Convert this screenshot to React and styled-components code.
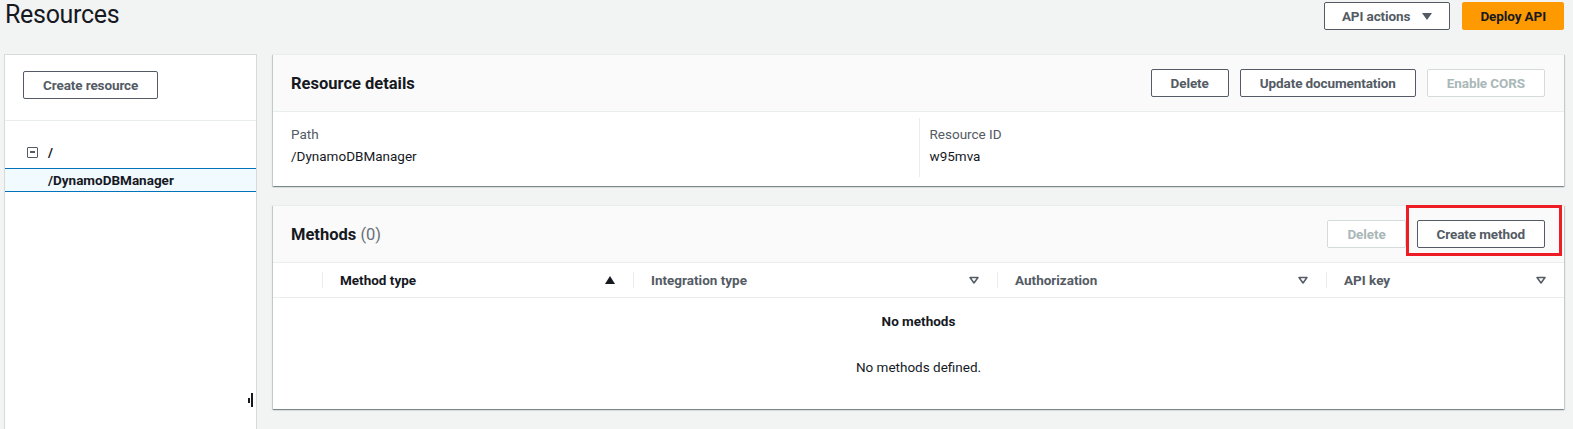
import React from 'react';
import styled, { createGlobalStyle, css } from 'styled-components';

const GlobalStyle = createGlobalStyle`
    body {
        margin: 0;
        background: #f2f3f3;
        font-family: Roboto, "Open Sans", sans-serif;
        color: #16191f;
        overflow: hidden;
    }
`;

//#region layout
const Page = styled.div`
    width: 1573px;
    height: 429px;
    overflow: hidden;
`;

const TopBar = styled.div`
    display: flex;
    justify-content: space-between;
    align-items: flex-start;
    padding: 2px 9px 0 5px;
    height: 54px;
    box-sizing: border-box;
`;

const Title = styled.h1`
    margin: -3px 0 0;
    font-size: 25px;
    line-height: 32px;
    font-weight: 400;
    letter-spacing: -0.3px;
    color: #16191f;
`;

const Actions = styled.div`
    display: flex;
    gap: ${(p) => p.$gap || 11}px;
`;

const Main = styled.div`
    display: grid;
    grid-template-columns: 253px 1fr;
    column-gap: 16px;
    padding: 0 9px 0 4px;
`;

const Column = styled.div`
    display: flex;
    flex-direction: column;
    gap: 19px;
`;
//#endregion

//#region buttons
const Button = styled.button`
    font-family: inherit;
    font-size: 13.5px;
    font-weight: 700;
    height: 28px;
    padding: 0 ${(p) => (p.$compact ? 17 : 19)}px;
    border-radius: 2px;
    background: #fff;
    border: 1px solid #545b64;
    color: #545b64;
    display: inline-flex;
    align-items: center;
    gap: 12px;
    cursor: pointer;
    letter-spacing: -0.1px;

    ${(p) => p.$primary && css`
        background: #ff9900;
        border-color: #ff9900;
        color: #16191f;
    `}

    ${(p) => p.disabled && css`
        border-color: #d5dbdb;
        color: #aab7b8;
        cursor: default;
    `}
`;

const Caret = styled.span`
    width: 0;
    height: 0;
    border-left: 5px solid transparent;
    border-right: 5px solid transparent;
    border-top: 7px solid #545b64;
`;

const Highlight = styled.div`
    position: relative;

    &::after {
        content: '';
        position: absolute;
        left: -11px;
        right: -17px;
        top: -15px;
        bottom: -8px;
        border: 3px solid #ee1c25;
        pointer-events: none;
    }
`;
//#endregion

//#region left tree
const SidePanel = styled.div`
    background: #fff;
    border: 1px solid #d5dbdb;
    border-bottom: none;
    height: 390px;
    position: relative;
`;

const SideTop = styled.div`
    padding: 16px 18px 21px;
    border-bottom: 1px solid #eaeded;
`;

const Tree = styled.div`
    padding-top: 19px;
`;

const TreeRow = styled.div`
    display: flex;
    align-items: center;
    height: 24px;
    box-sizing: border-box;
    gap: 10px;
    padding-left: ${(p) => p.$indent}px;
    font-size: 13.5px;
    font-weight: 700;
    color: #16191f;

    ${(p) => p.$selected && css`
        margin-top: 4px;
        background: #f1faff;
        border-top: 1px solid #0073bb;
        border-bottom: 1px solid #0073bb;
    `}
`;

const Toggle = styled.span`
    width: 9px;
    height: 9px;
    border: 1px solid #545b64;
    border-radius: 1px;
    display: inline-flex;
    align-items: center;
    justify-content: center;

    &::before {
        content: '';
        width: 5px;
        height: 2px;
        background: #545b64;
    }
`;

const Resizer = styled.div`
    position: absolute;
    right: 3px;
    top: 338px;
    display: flex;
    align-items: center;
    gap: 1px;

    &::before {
        content: '';
        width: 2px;
        height: 5px;
        background: #16191f;
    }

    &::after {
        content: '';
        width: 2px;
        height: 14px;
        background: #16191f;
    }
`;
//#endregion

//#region panels
const Panel = styled.section`
    background: #fff;
    border-top: 1px solid #eaeded;
    box-shadow: 0 1px 1px 0 rgba(0, 28, 36, 0.3), 1px 1px 1px 0 rgba(0, 28, 36, 0.15), -1px 1px 1px 0 rgba(0, 28, 36, 0.15);
`;

const PanelHeader = styled.header`
    display: flex;
    align-items: center;
    justify-content: space-between;
    height: 56px;
    padding: 0 19px 0 18px;
    background: #fafafa;
    border-bottom: 1px solid #eaeded;
`;

const PanelTitle = styled.h2`
    margin: 0;
    font-size: 16.5px;
    font-weight: 700;
    color: #16191f;

    span {
        font-weight: 400;
        color: #687078;
    }
`;

const Details = styled.div`
    display: grid;
    grid-template-columns: 1fr 1fr;
    padding: 6px 18px 9px;
`;

const Field = styled.div`
    padding: 8px 0 12px ${(p) => (p.$divided ? '10px' : '0')};
    border-left: ${(p) => (p.$divided ? '1px solid #eaeded' : 'none')};
    display: flex;
    flex-direction: column;
    gap: 5px;
    font-size: 13.5px;
    line-height: 17px;
`;

const Label = styled.div`
    color: #545b64;
`;

const Value = styled.div`
    color: #16191f;
`;

const TableHead = styled.div`
    display: grid;
    grid-template-columns: 49px 311px 364px 329px 1fr;
    height: 34px;
    border-bottom: 1px solid #eaeded;
`;

const HeadCell = styled.div`
    display: flex;
    align-items: center;
    justify-content: space-between;
    padding: 0 18px;
    font-size: 13.5px;
    font-weight: 700;
    color: ${(p) => (p.$active ? '#16191f' : '#545b64')};
    position: relative;

    &::before {
        content: '';
        display: ${(p) => (p.$first ? 'none' : 'block')};
        position: absolute;
        left: 0;
        top: 9px;
        bottom: 9px;
        width: 1px;
        background: #eaeded;
    }
`;

const SortUp = styled.span`
    width: 0;
    height: 0;
    border-left: 5px solid transparent;
    border-right: 5px solid transparent;
    border-bottom: 8px solid #16191f;
`;

const Empty = styled.div`
    display: flex;
    flex-direction: column;
    align-items: center;
    padding: 15px 0 33px;
    font-size: 13.5px;
    line-height: 17px;
    color: #16191f;

    strong {
        margin-bottom: 29px;
    }
`;
//#endregion

const SortDown = () => (
    <svg width="10" height="8" viewBox="0 0 10 8">
        <path d="M1 1.5 L9 1.5 L5 7 Z" fill="none" stroke="#545b64" strokeWidth="1.5" strokeLinejoin="round" />
    </svg>
);

const columns = [
    { name: 'Method type', sort: 'up' },
    { name: 'Integration type', sort: 'down' },
    { name: 'Authorization', sort: 'down' },
    { name: 'API key', sort: 'down' },
];

export default function App() {
    return (
        <Page>
            <GlobalStyle />
            <TopBar>
                <Title>Resources</Title>
                <Actions $gap={12}>
                    <Button $compact>API actions <Caret /></Button>
                    <Button $compact $primary>Deploy API</Button>
                </Actions>
            </TopBar>
            <Main>
                <SidePanel>
                    <SideTop>
                        <Button>Create resource</Button>
                    </SideTop>
                    <Tree>
                        <TreeRow $indent={22}><Toggle /> /</TreeRow>
                        <TreeRow $indent={43} $selected>/DynamoDBManager</TreeRow>
                    </Tree>
                    <Resizer />
                </SidePanel>
                <Column>
                    <Panel>
                        <PanelHeader>
                            <PanelTitle>Resource details</PanelTitle>
                            <Actions>
                                <Button>Delete</Button>
                                <Button>Update documentation</Button>
                                <Button disabled>Enable CORS</Button>
                            </Actions>
                        </PanelHeader>
                        <Details>
                            <Field>
                                <Label>Path</Label>
                                <Value>/DynamoDBManager</Value>
                            </Field>
                            <Field $divided>
                                <Label>Resource ID</Label>
                                <Value>w95mva</Value>
                            </Field>
                        </Details>
                    </Panel>
                    <Panel>
                        <PanelHeader>
                            <PanelTitle>Methods <span>(0)</span></PanelTitle>
                            <Actions>
                                <Button disabled>Delete</Button>
                                <Highlight>
                                    <Button>Create method</Button>
                                </Highlight>
                            </Actions>
                        </PanelHeader>
                        <TableHead>
                            <HeadCell $first />
                            {columns.map((c, i) => (
                                <HeadCell key={c.name} $active={i === 0}>
                                    {c.name}
                                    {c.sort === 'up' ? <SortUp /> : <SortDown />}
                                </HeadCell>
                            ))}
                        </TableHead>
                        <Empty>
                            <strong>No methods</strong>
                            <span>No methods defined.</span>
                        </Empty>
                    </Panel>
                </Column>
            </Main>
        </Page>
    );
}
